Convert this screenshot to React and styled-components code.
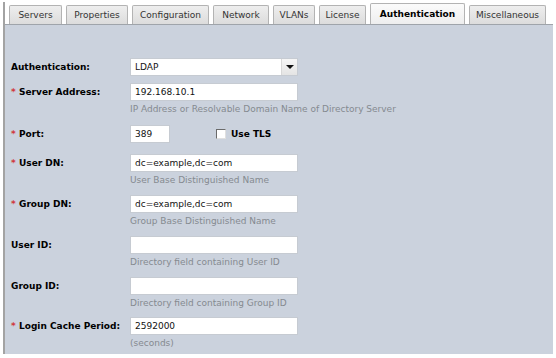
import React from "react";
import styled, { createGlobalStyle } from "styled-components";

const GlobalStyle = createGlobalStyle`
html, body {
  margin: 0;
  padding: 0;
  background: #ffffff;
  font-family: "DejaVu Sans", Verdana, sans-serif;
  font-size: 9px;
}
`

const Frame = styled.div`
width: 556px;
height: 358px;
box-sizing: border-box;
padding: 2px 3px 4px 3px;
display: flex;
flex-direction: column;
`

const Outer = styled.div`
flex: 1;
display: flex;
flex-direction: column;
border-left: 2px solid #a3a3a3;
`

const TabBar = styled.div`
display: flex;
align-items: flex-end;
gap: 4px;
height: 22px;
padding-left: 4px;
border-bottom: 1px solid #9fa4aa;
`

const Tab = styled.div`
width: ${p => p.$w}px;
height: ${p => (p.$active ? "21px" : "19px")};
box-sizing: border-box;
display: flex;
align-items: center;
justify-content: center;
border: 1px solid #b3b3b3;
border-bottom: none;
border-radius: 2px 2px 0 0;
background: ${p => (p.$active
  ? "linear-gradient(#fbfbfb, #eeeeee)"
  : "linear-gradient(#eeeeee, #dcdcdc)")};
color: ${p => (p.$active ? "#000" : "#333")};
font-weight: ${p => (p.$active ? "bold" : "normal")};
white-space: nowrap;
`

const Panel = styled.div`
flex: 1;
background: #cbd2dd;
padding: 33px 0 0 6px;
display: flex;
flex-direction: column;
`

const Row = styled.div`
display: grid;
grid-template-columns: 119px 1fr;
margin-bottom: ${p => p.$space}px;
`

const Label = styled.div`
height: 18px;
display: flex;
align-items: center;
font-weight: bold;
color: #000;
white-space: nowrap;
`

const Star = styled.span`
color: #d0373b;
width: 8px;
display: inline-block;
font-weight: bold;
`

const Field = styled.div`
display: flex;
flex-direction: column;
`

const Line = styled.div`
display: flex;
align-items: center;
gap: 46px;
`

const Input = styled.div`
width: ${p => p.$w}px;
height: 18px;
box-sizing: border-box;
background: #fff;
border: 1px solid #c6cbd2;
padding-left: 4px;
display: flex;
align-items: center;
color: #111;
`

const Select = styled.div`
width: 168px;
height: 18px;
box-sizing: border-box;
background: #fff;
border: 1px solid #c6cbd2;
display: flex;
align-items: center;
color: #111;
`

const SelectText = styled.span`
flex: 1;
padding-left: 4px;
`

const Arrow = styled.span`
width: 15px;
height: 16px;
border-left: 1px solid #d8d8d8;
background: linear-gradient(#f6f6f6, #e4e4e4);
display: flex;
align-items: center;
justify-content: center;
&:after {
  content: "";
  border-left: 4px solid transparent;
  border-right: 4px solid transparent;
  border-top: 4px solid #111;
}
`

const Hint = styled.div`
color: #858a90;
line-height: 14px;
margin-top: 1px;
white-space: nowrap;
`

const Check = styled.label`
display: flex;
align-items: center;
gap: 5px;
font-weight: bold;
color: #000;
`

const Box = styled.span`
width: 10px;
height: 10px;
box-sizing: border-box;
background: #fff;
border: 1px solid;
border-color: #6a6a6a #e0e0e0 #e0e0e0 #6a6a6a;
`

const tabs = [
  ["Servers", 53], ["Properties", 62], ["Configuration", 77], ["Network", 56],
  ["VLANs", 42], ["License", 47], ["Authentication", 95], ["Miscellaneous", 77],
]

const fields = [
  { label: "Server Address:", req: true, value: "192.168.10.1", hint: "IP Address or Resolvable Domain Name of Directory Server", space: 9 },
  { label: "Port:", req: true, value: "389", w: 40, tls: true, space: 11 },
  { label: "User DN:", req: true, value: "dc=example,dc=com", hint: "User Base Distinguished Name", space: 8 },
  { label: "Group DN:", req: true, value: "dc=example,dc=com", hint: "Group Base Distinguished Name", space: 8 },
  { label: "User ID:", value: "", hint: "Directory field containing User ID", space: 8 },
  { label: "Group ID:", value: "", hint: "Directory field containing Group ID", space: 7 },
  { label: "Login Cache Period:", req: true, value: "2592000", hint: "(seconds)", space: 0 },
]

const App = () => {
  return <>
    <GlobalStyle />
    <Frame>
      <Outer>
        <TabBar>
          {tabs.map(([t, w]) => <Tab key={t} $w={w} $active={t === "Authentication"}>{t}</Tab>)}
        </TabBar>
        <Panel>
          <Row $space={7}>
            <Label>Authentication:</Label>
            <Field>
              <Select><SelectText>LDAP</SelectText><Arrow /></Select>
            </Field>
          </Row>
          {fields.map(f => <Row key={f.label} $space={f.space}>
            <Label>{f.req ? <Star>*</Star> : null}{f.label}</Label>
            <Field>
              <Line>
                <Input $w={f.w || 168}>{f.value}</Input>
                {f.tls && <Check><Box />Use TLS</Check>}
              </Line>
              {f.hint && <Hint>{f.hint}</Hint>}
            </Field>
          </Row>)}
        </Panel>
      </Outer>
    </Frame>
  </>
}

export default App
